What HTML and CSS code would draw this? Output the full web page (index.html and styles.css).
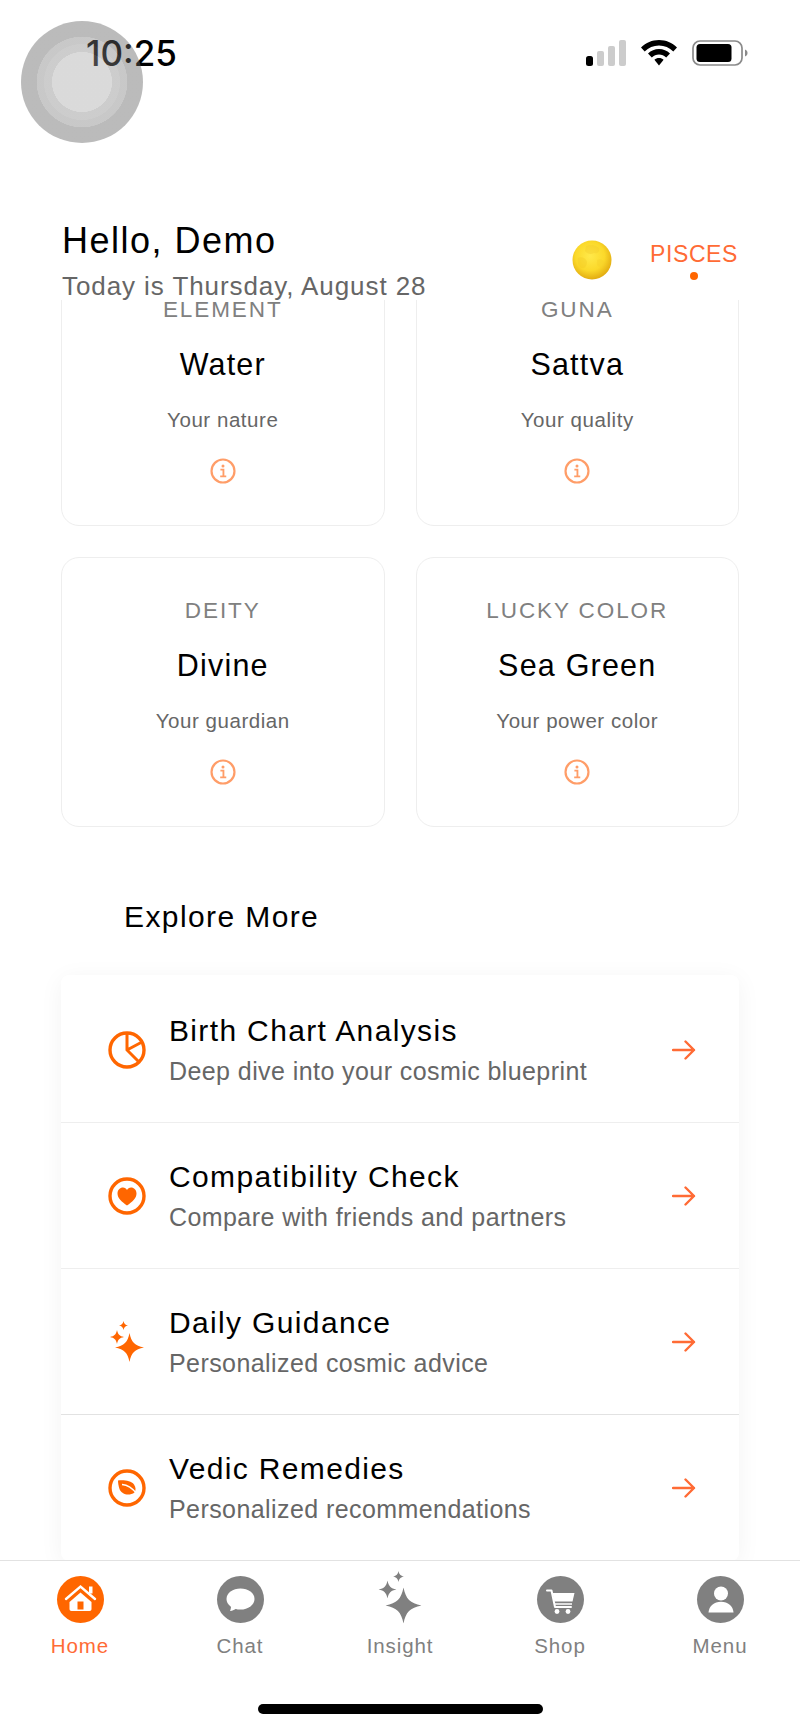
FILE: index.html
```html
<!DOCTYPE html>
<html lang="en">
<head>
<meta charset="utf-8">
<title>Home</title>
<link rel="stylesheet" href="styles.css">
</head>
<body>
<svg class="defs" width="0" height="0" aria-hidden="true">
  <defs>
    <symbol id="star" viewBox="-1 -1 2 2"><path d="M0-1C.13-.36.36-.13 1 0 .36.13.13.36 0 1-.13.36-.36.13-1 0-.36-.13-.13-.36 0-1Z"/></symbol>
    <symbol id="info" viewBox="0 0 24 24"><circle cx="12" cy="12" r="10.6" fill="none" stroke="currentColor" stroke-width="2"/><circle cx="12" cy="7.4" r="1.4" fill="currentColor"/><path d="M9.6 10.8H12.4V16.8M9.4 17H15" fill="none" stroke="currentColor" stroke-width="1.7"/></symbol>
    <symbol id="arrow" viewBox="0 0 24 20"><path d="M1 10H22M13.5 1.5 22 10 13.5 18.500" fill="none" stroke="currentColor" stroke-width="2.4" stroke-linecap="round" stroke-linejoin="round"/></symbol>
    <radialGradient id="moonFill" cx="45%" cy="40%" r="62%">
      <stop offset="0" stop-color="#ffe94a"/><stop offset=".6" stop-color="#fbd92a"/><stop offset="1" stop-color="#e0a80f"/>
    </radialGradient>
  </defs>
</svg>
<div class="app">
  <div class="status">
    <span class="time">10:25</span>
    <div class="status-icons">
      <svg class="signal" width="40" height="26" viewBox="0 0 40 26"><rect x="0" y="16" width="7" height="10" rx="2.500" fill="#000"/><rect x="11" y="11" width="7" height="15" rx="2" fill="#ccc"/><rect x="22" y="6" width="7" height="20" rx="2" fill="#ccc"/><rect x="33" y="0" width="7" height="26" rx="2" fill="#ccc"/></svg>
      <svg class="wifi" width="36" height="26" viewBox="0 0 36 26"><path d="M18 0C11 0 5 2.700 0 7.500L3.700 11.500C7.500 7.800 12.500 5.500 18 5.500S28.500 7.800 32.300 11.500L36 7.500C31 2.700 25 0 18 0Z"/><path d="M18 9C13.800 9 10 10.700 7 13.500L10.800 17.400C12.800 15.600 15.300 14.500 18 14.500S23.200 15.600 25.200 17.400L29 13.500C26 10.700 22.200 9 18 9Z"/><path d="M18 18C16.200 18 14.700 18.600 13.400 19.800L18 25.500 22.600 19.800C21.300 18.600 19.800 18 18 18Z"/></svg>
      <svg class="battery" width="56" height="26" viewBox="0 0 56 26"><rect x="1" y="1" width="49" height="24" rx="7" fill="none" stroke="#8a8a8a" stroke-width="1.700"/><rect x="4.500" y="4" width="35" height="18" rx="3.500" fill="#000"/><path d="M53 9.500C55 10.500 55.500 11.500 55.500 13S55 15.500 53 16.500Z" fill="#8a8a8a"/></svg>
    </div>
  </div>
  <div class="touch"></div>

  <header class="header">
    <div class="greeting">
      <h1 class="hello">Hello, Demo</h1>
      <p class="today">Today is Thursday, August 28</p>
    </div>
    <div class="sign">
      <svg class="moon" width="40" height="40" viewBox="0 0 40 40">
        <circle cx="20" cy="20" r="19.500" fill="url(#moonFill)"/>
        <path d="M14 6C18 4 24 5 27 8 28 12 25 14 22 13 19 15 15 14 13 11Z" fill="#f1c92a" opacity=".35"/>
        <path d="M6 18C9 16 14 18 15 22 15 27 11 30 8 27 6 25 5 21 6 18Z" fill="#eec422" opacity=".3"/>
        <path d="M25 20C28 18 32 20 33 24 31 28 27 28 25 25Z" fill="#f3cd2c" opacity=".35"/>
      </svg>
      <div class="sign-name">
        <span class="sign-label">PISCES</span>
        <span class="sign-dot"></span>
      </div>
    </div>
  </header>

  <main class="main">
    <div class="scroll">
      <section class="cards">
        <article class="card">
          <div class="card-label">ELEMENT</div>
          <div class="card-value">Water</div>
          <div class="card-sub">Your nature</div>
          <svg class="info"><use href="#info"/></svg>
        </article>
        <article class="card">
          <div class="card-label">GUNA</div>
          <div class="card-value">Sattva</div>
          <div class="card-sub">Your quality</div>
          <svg class="info"><use href="#info"/></svg>
        </article>
        <article class="card">
          <div class="card-label">DEITY</div>
          <div class="card-value">Divine</div>
          <div class="card-sub">Your guardian</div>
          <svg class="info"><use href="#info"/></svg>
        </article>
        <article class="card">
          <div class="card-label">LUCKY COLOR</div>
          <div class="card-value">Sea Green</div>
          <div class="card-sub">Your power color</div>
          <svg class="info"><use href="#info"/></svg>
        </article>
      </section>

      <h2 class="explore">Explore More</h2>

      <section class="list">
        <div class="row">
          <svg class="row-icon" viewBox="0 0 38 38">
            <circle cx="19" cy="19" r="17" fill="none" stroke="currentColor" stroke-width="3.400"/>
            <path d="M19 2V19L31 31M19 19 34 11" fill="none" stroke="currentColor" stroke-width="3"/>
          </svg>
          <div class="row-text">
            <div class="row-title">Birth Chart Analysis</div>
            <div class="row-sub">Deep dive into your cosmic blueprint</div>
          </div>
          <svg class="row-arrow"><use href="#arrow"/></svg>
        </div>
        <div class="row">
          <svg class="row-icon" viewBox="0 0 38 38">
            <circle cx="19" cy="19" r="17" fill="none" stroke="currentColor" stroke-width="3.400"/>
            <path d="M19 28.500C14 25 9.500 21.500 9.500 16.500 9.500 13 12 10.500 15 10.500 16.800 10.500 18.200 11.500 19 13 19.800 11.500 21.200 10.500 23 10.500 26 10.500 28.500 13 28.500 16.500 28.500 21.500 24 25 19 28.500Z" fill="currentColor"/>
          </svg>
          <div class="row-text">
            <div class="row-title">Compatibility Check</div>
            <div class="row-sub">Compare with friends and partners</div>
          </div>
          <svg class="row-arrow"><use href="#arrow"/></svg>
        </div>
        <div class="row">
          <svg class="row-icon" viewBox="0 0 38 38">
            <use href="#star" x="7" y="10" width="29" height="29" fill="currentColor"/>
            <use href="#star" x="2" y="7" width="14" height="14" fill="currentColor"/>
            <use href="#star" x="11" y="-2" width="9" height="9" fill="currentColor"/>
          </svg>
          <div class="row-text">
            <div class="row-title">Daily Guidance</div>
            <div class="row-sub">Personalized cosmic advice</div>
          </div>
          <svg class="row-arrow"><use href="#arrow"/></svg>
        </div>
        <div class="row">
          <svg class="row-icon" viewBox="0 0 38 38">
            <circle cx="19" cy="19" r="17" fill="none" stroke="currentColor" stroke-width="3.400"/>
            <path d="M10 11.500C16 11 23 11.500 26 15.500 28 18.500 28 21 26.500 23.500 21 27.500 13.500 25.500 11.500 20 10.500 17 10 14 10 11.500Z" fill="currentColor"/>
            <path d="M14 15.500C19 15.800 24 18.500 29 25" fill="none" stroke="#fff" stroke-width="1.600"/>
          </svg>
          <div class="row-text">
            <div class="row-title">Vedic Remedies</div>
            <div class="row-sub">Personalized recommendations</div>
          </div>
          <svg class="row-arrow"><use href="#arrow"/></svg>
        </div>
      </section>
    </div>
  </main>

  <nav class="nav">
    <div class="nav-item nav-active">
      <svg class="nav-icon" viewBox="0 0 47 47">
        <circle cx="23.500" cy="23.500" r="23.500" fill="currentColor"/>
        <path d="M12.500 26 23.500 16.500 34.500 26V33C34.500 34.300 33.800 35 32.500 35H14.500C13.200 35 12.500 34.300 12.500 33Z" fill="#fff"/>
        <path d="M9 23 23.500 10.500 38 23" fill="none" stroke="#fff" stroke-width="2.400" stroke-linecap="round"/>
        <rect x="32" y="10.500" width="3.500" height="7" fill="#fff"/>
        <rect x="20.500" y="25.500" width="6" height="8" fill="currentColor"/>
      </svg>
      <span class="nav-label">Home</span>
    </div>
    <div class="nav-item">
      <svg class="nav-icon" viewBox="0 0 47 47">
        <circle cx="23.500" cy="23.500" r="23.500" fill="currentColor"/>
        <ellipse cx="23.500" cy="23" rx="14" ry="10.500" fill="#fff"/>
        <path d="M14 29C14.200 31 13.800 33.300 13 35 15.500 34.800 18 33.800 19.500 32Z" fill="#fff"/>
      </svg>
      <span class="nav-label">Chat</span>
    </div>
    <div class="nav-item">
      <svg class="nav-icon" viewBox="0 0 47 47">
        <use href="#star" x="8.500" y="11.500" width="36" height="36" fill="currentColor"/>
        <use href="#star" x="1.500" y="4.500" width="18" height="18" fill="currentColor"/>
        <use href="#star" x="16" y="-5" width="11" height="11" fill="currentColor"/>
      </svg>
      <span class="nav-label">Insight</span>
    </div>
    <div class="nav-item">
      <svg class="nav-icon" viewBox="0 0 47 47">
        <circle cx="23.500" cy="23.500" r="23.500" fill="currentColor"/>
        <path d="M10 14.500H14.500L18 31H34" fill="none" stroke="#fff" stroke-width="2" stroke-linecap="round" stroke-linejoin="round"/>
        <path d="M15.500 17H37.500L35.500 25.500H17.300Z" fill="#fff"/>
        <path d="M17.500 28H35" fill="none" stroke="#fff" stroke-width="1.500"/>
        <circle cx="20" cy="35.500" r="2.400" fill="#fff"/>
        <circle cx="31" cy="35.500" r="2.400" fill="#fff"/>
      </svg>
      <span class="nav-label">Shop</span>
    </div>
    <div class="nav-item">
      <svg class="nav-icon" viewBox="0 0 47 47">
        <circle cx="23.500" cy="23.500" r="23.500" fill="currentColor"/>
        <circle cx="24" cy="17.500" r="7" fill="#fff"/>
        <path d="M11.500 36.500C12 30 17 25.800 24 25.800S36 30 36.500 36.500Z" fill="#fff"/>
      </svg>
      <span class="nav-label">Menu</span>
    </div>
  </nav>
  <div class="home-bar"><span class="home-indicator"></span></div>
</div>
</body>
</html>
```

FILE: styles.css
```css
* { box-sizing: border-box; }
html, body { margin: 0; padding: 0; background: #fff; }
body { font-family: "Liberation Sans", Arial, sans-serif; color: #000; overflow: hidden; }
.defs { position: absolute; }

.app {
  position: relative;
  display: flex;
  flex-direction: column;
  width: 800px;
  height: 1731px;
  overflow: hidden;
  background: #fff;
}

.status {
  display: flex;
  justify-content: space-between;
  align-items: flex-start;
  height: 216px;
  flex: none;
  padding: 33px 52px 0 86px;
}
.time {
  font-family: Inter, "Liberation Sans", sans-serif;
  font-weight: 500;
  font-size: 35px;
  line-height: 40px;
  letter-spacing: 0;
}
.status-icons {
  display: flex;
  align-items: center;
  gap: 15px;
  margin-top: 7px;
}
.signal, .wifi, .battery { display: block; }

.touch {
  position: absolute;
  left: 21px;
  top: 21px;
  width: 122px;
  height: 122px;
  border-radius: 50%;
  background: radial-gradient(circle closest-side,
    rgba(167,167,167,.42) 0, rgba(167,167,167,.42) 49%,
    rgba(135,135,135,.42) 49.500%, rgba(135,135,135,.42) 62%,
    rgba(125,125,125,.42) 62.500%, rgba(125,125,125,.42) 74%,
    rgba(100,100,100,.44) 74.500%, rgba(100,100,100,.44) 100%);
}

.header {
  position: relative;
  z-index: 2;
  flex: none;
  display: flex;
  justify-content: space-between;
  height: 84px;
  padding: 0 62px;
}
.hello {
  margin: 0;
  font-weight: 400;
  font-size: 36px;
  line-height: 50px;
  letter-spacing: 1.500px;
}
.today {
  margin: 4.500px 0 0;
  font-size: 26px;
  line-height: 30px;
  letter-spacing: .92px;
  color: #666;
  white-space: nowrap;
}
.sign {
  display: flex;
  align-items: flex-start;
  gap: 38px;
  padding-top: 24px;
}
.sign-name {
  display: flex;
  flex-direction: column;
  align-items: center;
  margin-top: -1px;
}
.sign-label {
  font-size: 23px;
  line-height: 30px;
  letter-spacing: .6px;
  color: #ff6b35;
}
.sign-dot {
  width: 8px;
  height: 8px;
  margin-top: 3px;
  border-radius: 50%;
  background: #ff6600;
}

.main {
  flex: 1;
  min-height: 0;
  overflow: hidden;
}
.scroll {
  margin-top: -44px;
  padding: 0 61px;
}
.cards {
  display: grid;
  grid-template-columns: 1fr 1fr;
  gap: 31px;
}
.card {
  display: flex;
  flex-direction: column;
  align-items: center;
  height: 270px;
  padding-top: 39px;
  border: 1.500px solid #eeeeee;
  border-radius: 18px;
  background: #fff;
}
.card-label {
  font-size: 22.500px;
  line-height: 28px;
  letter-spacing: 1.900px;
  color: #808080;
}
.card-value {
  margin-top: 21.500px;
  font-size: 30.500px;
  line-height: 36px;
  letter-spacing: 1.200px;
}
.card-sub {
  margin-top: 26px;
  font-size: 20.500px;
  line-height: 24px;
  letter-spacing: .55px;
  color: #666;
}
.info {
  width: 26px;
  height: 26px;
  margin-top: 26px;
  color: #ff9d68;
}

.explore {
  margin: 72px 0 0 63px;
  font-weight: 400;
  font-size: 30px;
  line-height: 36px;
  letter-spacing: 1.400px;
}
.list {
  margin-top: 40px;
  padding-top: 1.500px;
  background: #fff;
  border-radius: 8px;
  box-shadow: 0 4px 24px rgba(0,0,0,.05);
}
.row {
  display: flex;
  align-items: center;
  height: 146px;
  padding: 2px 43px 0 47px;
  border-bottom: 1.500px solid #eeeeee;
}
.row:nth-child(3) { border-bottom-color: #e2e2e2; }
.row-icon {
  flex: none;
  width: 38px;
  height: 38px;
  color: #ff6600;
  overflow: visible;
}
.row-text {
  flex: 1;
  margin: 0 0 2px 23px;
}
.row-title {
  font-size: 30px;
  line-height: 38px;
  letter-spacing: 1.350px;
}
.row-sub {
  margin-top: 6px;
  font-size: 25px;
  line-height: 30px;
  letter-spacing: .42px;
  color: #666;
}
.row-arrow {
  flex: none;
  width: 24px;
  height: 20px;
  color: #ff6b35;
}

.nav {
  flex: none;
  display: flex;
  position: relative;
  z-index: 2;
  height: 122px;
  padding-top: 15px;
  border-top: 1.500px solid #e2e2e2;
  background: #fff;
}
.nav-item {
  flex: 1;
  display: flex;
  flex-direction: column;
  align-items: center;
  color: #808080;
}
.nav-active { color: #ff6600; }
.nav-icon {
  width: 47px;
  height: 47px;
  overflow: visible;
}
.nav-label {
  margin-top: 10px;
  font-size: 20.500px;
  line-height: 26px;
  letter-spacing: .9px;
}
.nav-active .nav-label { color: #ff6b35; }

.home-bar {
  flex: none;
  display: flex;
  justify-content: center;
  height: 49px;
  padding-top: 22px;
  background: #fff;
}
.home-indicator {
  width: 285px;
  height: 10px;
  border-radius: 5px;
  background: #000;
}
```
